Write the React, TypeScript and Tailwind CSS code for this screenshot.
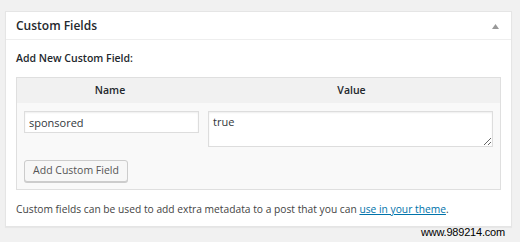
import React from 'react';

const font = { fontFamily: '"Open Sans", "Liberation Sans", sans-serif' };

const CustomFieldsBox: React.FC = () => {
  return (
    <div className="ml-[5px] w-[507px] border border-[#e5e5e5] bg-white shadow-[0_1px_1px_rgba(0,0,0,0.04)]">
      {/* Header */}
      <div className="flex h-[28px] items-center justify-between border-b border-[#eeeeee] pl-[10px] pr-[12px]">
        <h2 className="text-[12px] font-semibold text-[#23282d]">Custom Fields</h2>
        <svg width="7" height="5" viewBox="0 0 7 5" className="mt-[1px]">
          <polygon points="3.5,0 7,5 0,5" fill="#999" />
        </svg>
      </div>

      {/* Body */}
      <div className="px-[10px] pt-[11px] pb-[10px]">
        <p className="text-[10.5px] font-semibold leading-[14px] text-[#23282d]">Add New Custom Field:</p>

        <div className="mt-[12px] border border-[#dfdfdf] bg-[#f9f9f9]">
          {/* Table head */}
          <div className="grid h-[25px] grid-cols-[186px_1fr] items-center bg-[#f1f1f1] text-[10.5px] font-semibold text-[#23282d]">
            <div className="text-center">Name</div>
            <div className="text-center">Value</div>
          </div>

          {/* Row */}
          <div className="grid grid-cols-[186px_1fr] items-start pt-[8px]">
            <div className="pl-[7px] pr-[4px]">
              <input
                type="text"
                defaultValue="sponsored"
                className="block h-[22px] w-[175px] border border-[#dddddd] bg-white px-[4px] text-[11px] text-[#32373c] shadow-[inset_0_1px_2px_rgba(0,0,0,0.07)] outline-none"
              />
            </div>
            <div className="pl-[5px] pr-[7px]">
              <textarea
                defaultValue="true"
                className="block h-[36px] w-[285px] resize border border-[#dddddd] bg-white px-[4px] py-[2px] text-[11px] leading-[15px] text-[#32373c] shadow-[inset_0_1px_2px_rgba(0,0,0,0.07)] outline-none"
              />
            </div>
          </div>

          {/* Button */}
          <div className="pl-[7px] pt-[13px] pb-[7px]">
            <button className="block h-[22px] w-[104px] rounded-[3px] border border-[#cccccc] bg-[#f7f7f7] text-[10.5px] text-[#555555] shadow-[0_1px_0_#cccccc]">
              Add Custom Field
            </button>
          </div>
        </div>

        <p className="mt-[12px] text-[10.25px] leading-[14px] text-[#444444]">
          Custom fields can be used to add extra metadata to a post that you can{' '}
          <a href="#" className="text-[#0073aa] underline">
            use in your theme
          </a>
          .
        </p>
      </div>
    </div>
  );
};

const App: React.FC = () => {
  return (
    <div className="h-[242px] w-[520px] overflow-hidden bg-[#f1f1f1] pt-[11px]" style={font}>
      <CustomFieldsBox />
      <div className="flex justify-end pr-[15px]">
        <span
          className="text-[11px] leading-[11px] tracking-[-0.2px] text-black"
          style={{ fontFamily: '"Liberation Sans", Arial, sans-serif' }}
        >
          www.989214.com
        </span>
      </div>
    </div>
  );
};

export default App;
